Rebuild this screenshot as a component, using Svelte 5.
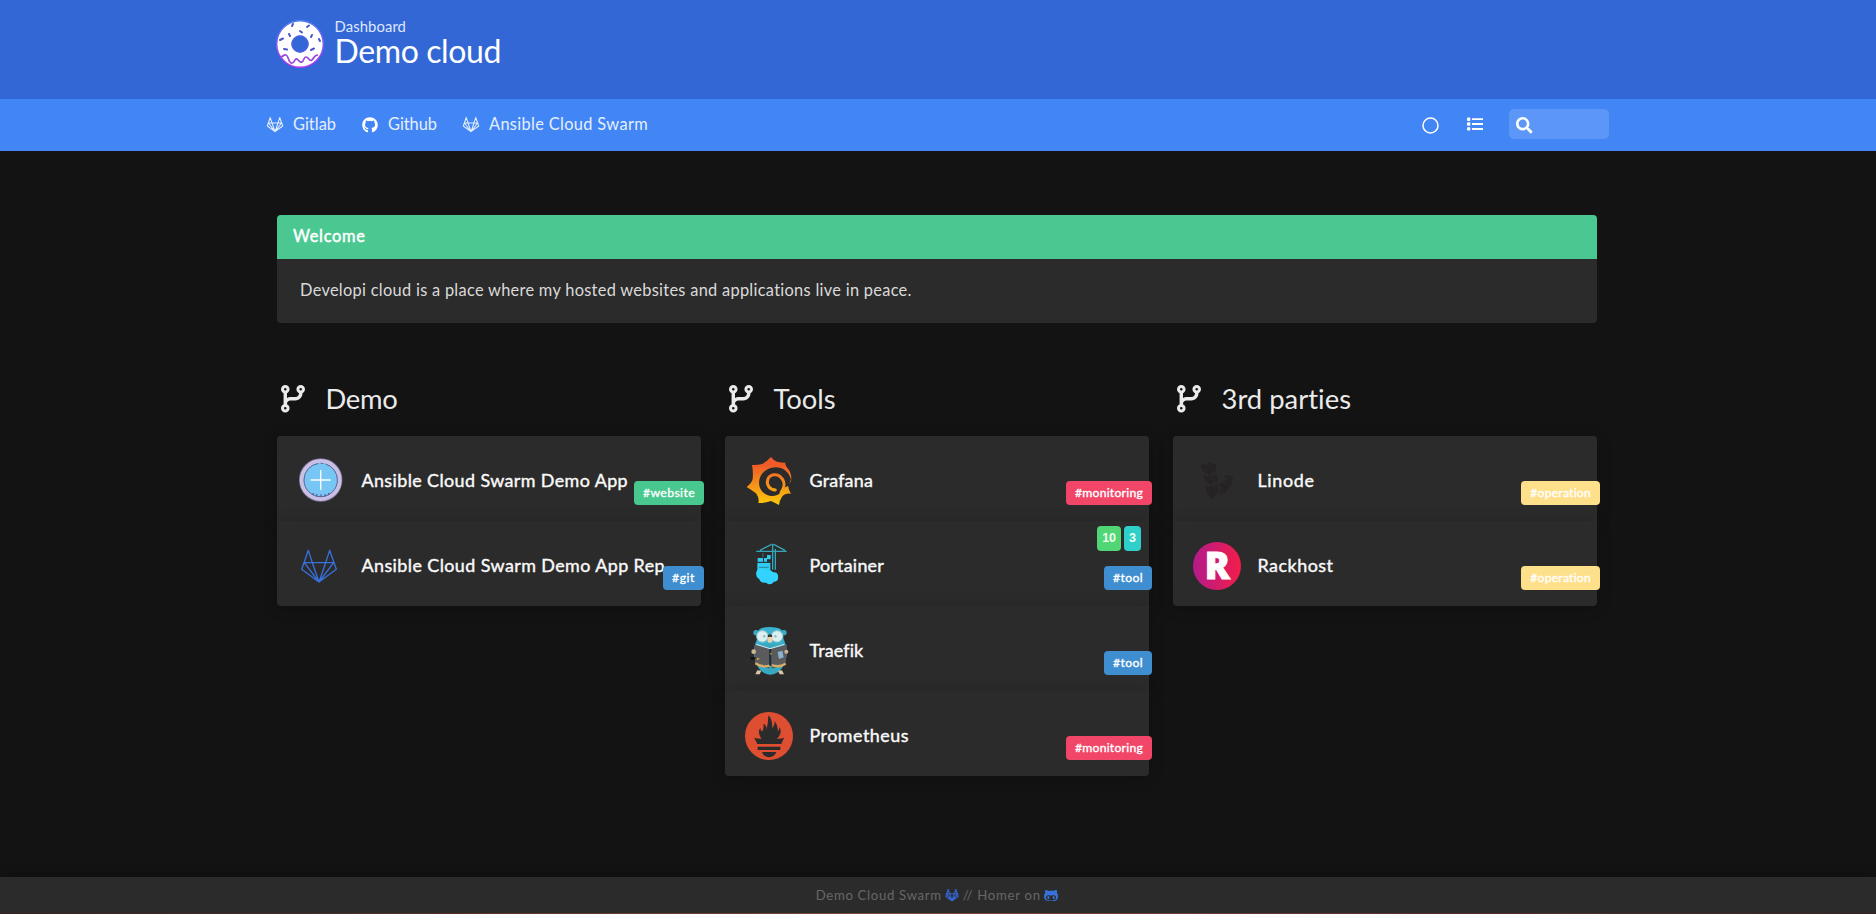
<script>
  const nav = [
    { icon: 'gitlab', label: 'Gitlab', w: 43 },
    { icon: 'github', label: 'Github', w: 49 },
    { icon: 'gitlab', label: 'Ansible Cloud Swarm', w: 159 },
  ];
  const groups = [
    {
      name: 'Demo', w: 72,
      items: [
        { logo: 'app', name: 'Ansible Cloud Swarm Demo App', w: 266.5, tag: '#website', tw: 52, color: 'green' },
        { logo: 'gitlab', name: 'Ansible Cloud Swarm Demo App Rep', w: 303.5, tag: '#git', tw: 23, color: 'blue' },
      ],
    },
    {
      name: 'Tools', w: 62,
      items: [
        { logo: 'grafana', name: 'Grafana', w: 63.5, tag: '#monitoring', tw: 68, color: 'red' },
        { logo: 'portainer', name: 'Portainer', w: 74.5, tag: '#tool', tw: 30, color: 'blue', counts: [10, 3] },
        { logo: 'traefik', name: 'Traefik', w: 53.5, tag: '#tool', tw: 30, color: 'blue' },
        { logo: 'prometheus', name: 'Prometheus', w: 99.5, tag: '#monitoring', tw: 68, color: 'red' },
      ],
    },
    {
      name: '3rd parties', w: 130,
      items: [
        { logo: 'linode', name: 'Linode', w: 57, tag: '#operation', tw: 61, color: 'yellow' },
        { logo: 'rackhost', name: 'Rackhost', w: 76, tag: '#operation', tw: 61, color: 'yellow' },
      ],
    },
  ];

  // Spreads the letters of a label evenly over the given width.
  function track(node, width) {
    const n = node.textContent.length;
    const natural = node.getBoundingClientRect().width;
    node.style.letterSpacing = `${(width - natural) / n}px`;
  }
</script>

{#snippet fox(cls)}
  <svg class={cls} viewBox="0 0 108 100" fill="none" stroke="currentColor" stroke-linejoin="round">
    <path d="M22 3 2 60 54 98 106 60 86 3 74 40H34ZM10 40H34L54 98 74 40H98L54 98Z" />
  </svg>
{/snippet}

<div class="page">
  <header>
    <svg class="logo" viewBox="0 0 48 48">
      <defs>
        <linearGradient id="donut" x1="0" y1="0" x2="0" y2="1">
          <stop offset="0" stop-color="#4f7df0" /><stop offset="1" stop-color="#b82df0" />
        </linearGradient>
      </defs>
      <circle cx="24" cy="24" r="16" fill="none" stroke="#fff" stroke-width="15" />
      <circle cx="24" cy="24" r="23.300" fill="none" stroke="url(#donut)" stroke-width="1.400" />
      <circle cx="24" cy="24" r="8.300" fill="none" stroke="#5d62e8" stroke-width="1" />
      <path d="M5 37c3-1 3-3 5-2 3 1 2 7 5 8 4 1 3-5 6-4 2 1 2 4 5 3 3-2 1-5 4-5s3 5 6 3c2-2 2-5 6-5" fill="none" stroke="#9848dc" stroke-width="1.700" />
      <path d="m16 6 1-2M31 7l2-1.500M24 11l2 1.500M13 14l1 2M35 17l1-2M4 20l3-1.500M43 19l1 2M8 29l3 .5M35 30l3-1.500" stroke="#4c55c8" stroke-width="2" stroke-linecap="round" />
    </svg>
    <div class="heading">
      <div class="sub"><span use:track={71.5}>Dashboard</span></div>
      <h1><span use:track={166.5}>Demo cloud</span></h1>
    </div>
  </header>

  <nav>
    {#each nav as link}
      <a href="#top">
        {#if link.icon === 'gitlab'}
          {@render fox('fox-small')}
        {:else}
          <svg class="github" viewBox="0 0 496 512" fill="currentColor"><path d="M244.800 8C106.100 8 0 113.300 0 252c0 110.900 69.800 205.800 169.500 239.200 12.800 2.300 17.300-5.600 17.300-12.100 0-6.200-.3-40.400-.3-61.400 0 0-70 15-84.700-29.800 0 0-11.400-29.100-27.800-36.600 0 0-22.900-15.700 1.600-15.400 0 0 24.900 2 38.600 25.800 21.900 38.600 58.600 27.500 72.900 20.900 2.300-16 8.800-27.100 16-33.700-55.900-6.200-112.300-14.300-112.300-110.500 0-27.500 7.600-41.300 23.600-58.900-2.600-6.500-11.100-33.300 2.600-67.900 20.900-6.500 69 27 69 27 20-5.600 41.500-8.500 62.800-8.500s42.800 2.900 62.800 8.500c0 0 48.100-33.600 69-27 13.700 34.700 5.200 61.400 2.600 67.900 16 17.700 25.800 31.500 25.800 58.900 0 96.500-58.900 104.200-114.800 110.500 9.200 7.900 17 22.900 17 46.400 0 33.700-.3 75.400-.3 83.600 0 6.500 4.600 14.400 17.300 12.100C428.200 457.800 496 362.900 496 252 496 113.300 383.500 8 244.800 8z" /></svg>
        {/if}
        <span class="nl"><span use:track={link.w}>{link.label}</span></span>
      </a>
    {/each}
    <div class="tools">
      <svg class="circle" viewBox="0 0 17 17"><circle cx="8.500" cy="8.500" r="7.500" fill="none" stroke="#fff" stroke-width="1.500" /></svg>
      <svg class="list" viewBox="0 0 16 14" fill="#fff">
        <path d="M5 1.200h11v1.900H5zM5 6h11v1.900H5zM5 11h11v1.900H5z" />
        <rect x="0" y=".5" width="3.400" height="3.400" rx="1" /><rect x="0" y="5.300" width="3.400" height="3.400" rx="1" /><rect x="0" y="10.200" width="3.400" height="3.400" rx="1" />
      </svg>
      <div class="search">
        <svg viewBox="0 0 512 512" fill="#fff"><path d="M505 442.700L405.300 343c-4.500-4.500-10.600-7-17-7H372c27.600-35.300 44-79.700 44-128C416 93.100 322.900 0 208 0S0 93.100 0 208s93.100 208 208 208c48.300 0 92.700-16.400 128-44v16.300c0 6.400 2.500 12.500 7 17l99.700 99.700c9.400 9.400 24.600 9.400 33.900 0l28.300-28.300c9.400-9.400 9.400-24.600.1-34zM208 336c-70.700 0-128-57.200-128-128 0-70.700 57.200-128 128-128 70.700 0 128 57.200 128 128 0 70.700-57.200 128-128 128z" /></svg>
      </div>
    </div>
  </nav>

  <main>
    <article>
      <div class="mh"><span use:track={72.5}>Welcome</span></div>
      <div class="mb"><span use:track={612}>Developi cloud is a place where my hosted websites and applications live in peace.</span></div>
    </article>

    <div class="columns">
      {#each groups as g}
        <section>
          <h2>
            <svg viewBox="0 0 448 512" fill="currentColor"><path fill-rule="evenodd" d="M80 104a24 24 0 1 0 0-48 24 24 0 1 0 0 48zm80-24c0 32.800-19.700 61-48 73.300v87.800c18.800-10.900 40.700-17.100 64-17.100h96c35.300 0 64-28.700 64-64v-6.700C307.700 141 288 112.800 288 80c0-44.200 35.800-80 80-80s80 35.800 80 80c0 32.800-19.700 61-48 73.300V160c0 70.700-57.300 128-128 128H176c-35.300 0-64 28.700-64 64v6.700c28.300 12.300 48 40.500 48 73.300 0 44.200-35.800 80-80 80s-80-35.800-80-80c0-32.800 19.700-61 48-73.300V153.300C19.700 141 0 112.800 0 80 0 35.800 35.800 0 80 0s80 35.800 80 80zm232 0a24 24 0 1 0-48 0 24 24 0 1 0 48 0zM80 456a24 24 0 1 0 0-48 24 24 0 1 0 0 48z" /></svg>
            <span use:track={g.w}>{g.name}</span>
          </h2>
          <div class="cards">
            {#each g.items as item}
              <div class="card">
                <div class="pic">
                  {#if item.logo === 'app'}
                    <svg viewBox="0 0 48 48">
                      <circle cx="23.700" cy="23" r="19.500" fill="#77c6f5" stroke="#776b96" stroke-width="4.500" />
                      <circle cx="23.700" cy="23" r="19" fill="none" stroke="#c9c0e4" stroke-width="4" />
                      <circle cx="23.700" cy="23" r="16.700" fill="none" stroke="#5e679e" stroke-width="1" stroke-dasharray="76 2 3 2 40" />
                      <path d="M23.700 13v20M13.700 23h20" stroke="#fff" stroke-width="1.300" />
                      <path d="m16 36 .5 2m3.200-1 .3 2.500M24 37.500v2.500m4.300-3-.3 2.500m4-3.500-.7 2" stroke="#5b5792" stroke-width="1.200" />
                    </svg>
                  {:else if item.logo === 'gitlab'}
                    {@render fox('fox-large')}
                  {:else if item.logo === 'grafana'}
                    <svg viewBox="0 0 144 144">
                      <defs><linearGradient id="graf" gradientUnits="userSpaceOnUse" x1="0" y1="10" x2="0" y2="144"><stop offset=".1" stop-color="#f05a28" /><stop offset="1" stop-color="#fbca0a" /></linearGradient></defs>
                      <path fill="url(#graf)" d="M78 0Q86 11 96 14 109 17 121 17 120 25 128 34 142 52 138 72L129 86Q131 100 138 110 120 108 111 119 104 129 102 144 88 136 78 132 59 139 40 138 44 124 33 109 20 99 5 90 20 79 23 66 25 43 21 24 36 25 52 21 65 14 78 0Z" />
                      <path fill="#2b2b2b" d="M138 67C131 39 104 25 77 33 48 42 34 72 47 97 59 119 91 124 109 106L121 90 131 86Z" />
                      <path fill="none" stroke="url(#graf)" stroke-width="9" stroke-linecap="round" d="M91 99C73 98 64 83 68 69 73 51 97 48 109 62 120 74 119 92 108 107" />
                    </svg>
                  {:else if item.logo === 'portainer'}
                    <svg viewBox="0 0 144 144" fill="#2fcdf1">
                      <g fill="none" stroke="#36a6b9" stroke-width="4"><path d="M34 28h91M83 5v78M91 21v62M80 7 45 25M86 7l34 18" /><path d="M54 34v12" stroke-width="2" /></g>
                      <path d="M38 48h16v12H38zM57 48h9v12h-9zM66 39h11v13H66zM37 63h39v24H37z" />
                      <path d="M38 84c9-7 17-4 22 2 9-4 19-2 24 5 11-3 17 6 15 15 2 9-6 14-13 13-6 10-17 9-22 3-12 2-20-3-21-11-10-3-13-21-5-27Z" fill="#32d4ff" />
                      <path d="M38 60h39M42 76h29" stroke="#285f70" stroke-width="2" />
                    </svg>
                  {:else if item.logo === 'traefik'}
                    <svg viewBox="0 0 144 144">
                      <ellipse cx="76" cy="76" rx="49" ry="67" fill="#37a9c2" />
                      <circle cx="33" cy="17" r="8" fill="#3baac1" /><circle cx="117" cy="17" r="8" fill="#3baac1" />
                      <path d="M38 17Q38 0 75 0t40 18v32H36Z" fill="#3bb3cf" />
                      <circle cx="52" cy="28" r="17" fill="#dceff1" stroke="#a3c9cf" stroke-width="3" /><circle cx="96" cy="28" r="17" fill="#dceff1" stroke="#a3c9cf" stroke-width="3" />
                      <circle cx="58" cy="28" r="4" fill="#9dbfc5" /><circle cx="91" cy="28" r="4" fill="#9dbfc5" />
                      <ellipse cx="75" cy="27" rx="7" ry="5" fill="#332f2c" /><ellipse cx="75" cy="38" rx="8" ry="9" fill="#e7d3ad" />
                      <path d="M28 53 73 65v60L30 110ZM80 65l46-12-4 59-42 13Z" fill="#5b5b5d" />
                      <path d="M31 109q21 14 44 6M80 114q21 9 42-4" stroke="#d6ad69" stroke-width="7" fill="none" />
                      <path d="M34 52 75 65l43-13" stroke="#dce2df" stroke-width="3" fill="none" />
                      <path d="M76 66v50" stroke="#25272a" stroke-width="7" />
                      <path d="m98 75 14-4 4 20-14 5Z" fill="#88b4ce" /><circle cx="78" cy="80" r="3" fill="#ad902e" />
                      <circle cx="26" cy="74" r="7" fill="#cbb695" /><circle cx="124" cy="74" r="6" fill="#cbb695" />
                      <path d="M15 91h18l-5 7h-9Z" fill="#111" /><path d="m35 92 10 3-8 5Z" fill="#dab72c" />
                      <path d="m37 130-6 12h13l5-11M111 130l6 12h-13l-5-11" fill="#d8c7a5" />
                    </svg>
                  {:else if item.logo === 'prometheus'}
                    <svg viewBox="0 0 144 144">
                      <circle cx="72" cy="72" r="72" fill="#de4e31" />
                      <path fill="#2b2b2b" d="M28 77q12 4 21 3Q36 61 46 47q0 10 6 11 6-13 3-23 12 5 9 21Q70 32 70 10q12 9 12 39 8-9 7-22 12 17 9 31 5-3 6-13 9 20-9 35 12 1 22-3l-8 19H37ZM38 104h68v10H38ZM51 120h43q-5 14-22 16-17-2-21-16Z" />
                    </svg>
                  {:else if item.logo === 'linode'}
                    <svg viewBox="0 0 144 144" fill="#262424" stroke="#322f2e" stroke-width="2">
                      <path d="m22 24 27-10 21 8 3 23-26 10-19-10ZM28 49l19 9 26-10 4 25-23 12-20-11ZM35 79l18 9 24-12 2 28-20 25-20-20Z" />
                      <path d="m79 80 20-16-11-9 20-2 12 7v24L99 105l-18 12Z" /><path d="m22 24 24 11 24-13M46 35l13 91M79 81l19 8 22-26M98 89v15" fill="none" stroke="#1f1e1e" />
                    </svg>
                  {:else}
                    <svg viewBox="0 0 48 48">
                      <defs><linearGradient id="rack"><stop stop-color="#b31b8b" /><stop offset="1" stop-color="#f31d49" /></linearGradient></defs>
                      <circle cx="24" cy="24" r="24" fill="url(#rack)" />
                      <text x="24.300" y="37" text-anchor="middle" class="r">R</text>
                    </svg>
                  {/if}
                </div>
                <p class="name"><span use:track={item.w}>{item.name}</span></p>
                {#if item.counts}
                  <div class="counts"><b>{item.counts[0]}</b><b class="teal">{item.counts[1]}</b></div>
                {/if}
                <strong class="tag {item.color}"><span use:track={item.tw}>{item.tag}</span></strong>
              </div>
            {/each}
          </div>
        </section>
      {/each}
    </div>
  </main>

  <footer>
    <span use:track={126}>Demo Cloud Swarm</span>
    {@render fox('fox-foot')}
    <span use:track={78}>// Homer on</span>
    <svg class="cat" viewBox="0 32 480 448" fill="currentColor"><path d="M186.100 328.700c0 20.900-10.900 55.100-36.700 55.100s-36.700-34.200-36.700-55.100 10.900-55.100 36.700-55.100 36.700 34.200 36.700 55.100zM480 278.200c0 31.900-3.200 65.700-17.500 95-37.900 76.600-142.100 74.800-216.700 74.800-75.800 0-186.200 2.700-225.600-74.800-14.600-29-20.200-63.100-20.200-95 0-41.900 13.900-81.500 41.500-113.600-5.200-15.800-7.700-32.400-7.700-48.800 0-21.500 4.900-32.300 14.600-51.800 45.300 0 74.300 9 108.800 36 29-6.900 58.800-10 88.700-10 27 0 54.200 2.900 80.400 9.200 34-26.700 63-35.200 107.800-35.200 9.800 19.500 14.600 30.300 14.600 51.800 0 16.400-2.600 32.700-7.700 48.200 27.500 32.400 39 72.300 39 114.200zm-64.300 50.500c0-43.900-26.700-82.600-73.500-82.600-18.900 0-37 3.400-56 6-14.900 2.300-29.800 3.200-45.100 3.200-15.200 0-30.100-.9-45.100-3.200-18.700-2.600-37-6-56-6-46.800 0-73.500 38.700-73.500 82.600 0 87.800 80.400 101.300 150.400 101.300h48.200c70.300 0 150.600-13.400 150.600-101.300zm-82.600-55.100c-25.800 0-36.700 34.200-36.700 55.100s10.900 55.100 36.700 55.100 36.700-34.200 36.700-55.100-10.900-55.100-36.700-55.100z" /></svg>
  </footer>
  <div class="edge"></div>
</div>

<style>
  :global(body) { margin: 0; background: #131313; overflow: hidden; }
  * { box-sizing: border-box; }
  span { white-space: nowrap; }
  svg { display: block; flex: none; overflow: visible; }
  .page { height: 914px; display: flex; flex-direction: column; font-family: Lato, sans-serif; font-size: 16.400px; color: #eaeaea; background: #131313; }
  header { height: 99px; flex: none; background: #3367d6; padding: 20px 276px; display: flex; gap: 10.500px; color: #fff; }
  .logo { width: 48px; height: 48px; }
  .heading { margin-top: -2px; }
  .heading span { display: inline-block; vertical-align: top; }
  .sub { font-size: 14.800px; line-height: 17px; height: 17px; color: #dfe8ff; }
  h1 { margin: 0; font-size: 32px; line-height: 32px; font-weight: 400; }
  nav { height: 52px; flex: none; background: #4285f4; padding: 0 267px; display: flex; align-items: center; color: #e4efff; }
  nav a { display: flex; align-items: center; gap: 10px; margin-right: 26px; color: inherit; text-decoration: none; line-height: 24px; }
  .nl { margin-top: -3px; }
  .fox-small { width: 16px; height: 15px; stroke-width: 7px; margin-top: -1px; }
  .github { width: 16px; height: 16px; color: #fff; }
  .tools { margin-left: auto; display: flex; align-items: center; height: 30px; margin-top: -2px; }
  .circle { width: 17px; height: 17px; margin-right: 27.500px; margin-top: 2px; }
  .list { width: 16px; height: 14px; margin-right: 26.500px; }
  .search { width: 100px; height: 30px; border-radius: 5px; background: #5c97f7; padding: 8px 7px; }
  .search svg { width: 16.500px; height: 16.500px; }
  main { padding: 64px 279px 0 277px; flex: 1; }
  article { border-radius: 4px; overflow: hidden; height: 108px; background: #2b2b2b; }
  .mh { height: 44px; background: #4bc891; color: #fff; padding: 9px 16px; line-height: 24px; -webkit-text-stroke: .45px currentColor; }
  .mb { padding: 19px 23px; line-height: 24px; color: #dadada; }
  .columns { display: grid; grid-template-columns: repeat(3, 424px); gap: 24px; margin-top: 57px; }
  h2 { margin: 0; height: 56px; display: flex; align-items: flex-start; font-size: 27.400px; line-height: 37px; font-weight: 400; padding: 0 0 0 4px; }
  h2 svg { width: 24px; height: 27.500px; margin: 4.500px 20.500px 0 0; }
  .card { position: relative; height: 85px; display: flex; padding: 21px 20px 0; gap: 16.500px; background: #2b2b2b; box-shadow: 0 2px 15px rgba(0, 0, 0, .2); }
  .card:first-child { border-radius: 4px 4px 0 0; }
  .card:last-child { border-radius: 0 0 4px 4px; }
  .pic { width: 48px; height: 48px; flex: none; display: grid; place-items: center; }
  .pic > svg { width: 48px; height: 48px; }
  .pic > :global(.fox-large) { width: 36px; height: 34px; stroke-width: 4px; color: #3871dc; margin-left: -4px; }
  .r { font: 800 37px "Open Sans", sans-serif; fill: #fff; stroke: #fff; stroke-width: 1px; }
  .name { margin: 0; font-size: 17.900px; line-height: 46px; color: #fafafa; -webkit-text-stroke: .4px currentColor; }
  .tag { position: absolute; right: -3px; top: 45px; height: 24px; border-radius: 4px; padding: 0 9px; font-size: 12.200px; line-height: 23px; font-weight: 400; color: #fff; -webkit-text-stroke: .35px currentColor; }
  .green { background: #48c78e; }
  .blue { background: #3e8ed0; }
  .red { background: #f14668; }
  .yellow { background: #ffe08a; }
  .counts { position: absolute; right: 8px; top: 5px; display: flex; gap: 3px; }
  .counts b { height: 25px; border-radius: 4px; background: #51d675; color: #f0fff0; font: bold 12.500px/25px "Liberation Sans", sans-serif; padding: 0 5px; }
  .counts .teal { background: #2fcfca; }
  footer { height: 36px; flex: none; background: #2b2b2b; box-shadow: 0 2px 15px rgba(0, 0, 0, .4); display: flex; justify-content: center; align-items: center; gap: 3.500px; font-size: 13.200px; color: #676767; padding-right: 2px; }
  .fox-foot { width: 14px; height: 12px; stroke-width: 9px; color: #3367d6; }
  .cat { width: 14px; height: 13px; color: #3871dc; }
  .edge { height: 1px; flex: none; background: linear-gradient(90deg, #3a2222, #4a2a20 15%, #7d4a3e 48%, #703a35 60%, #3a2222); }
</style>
